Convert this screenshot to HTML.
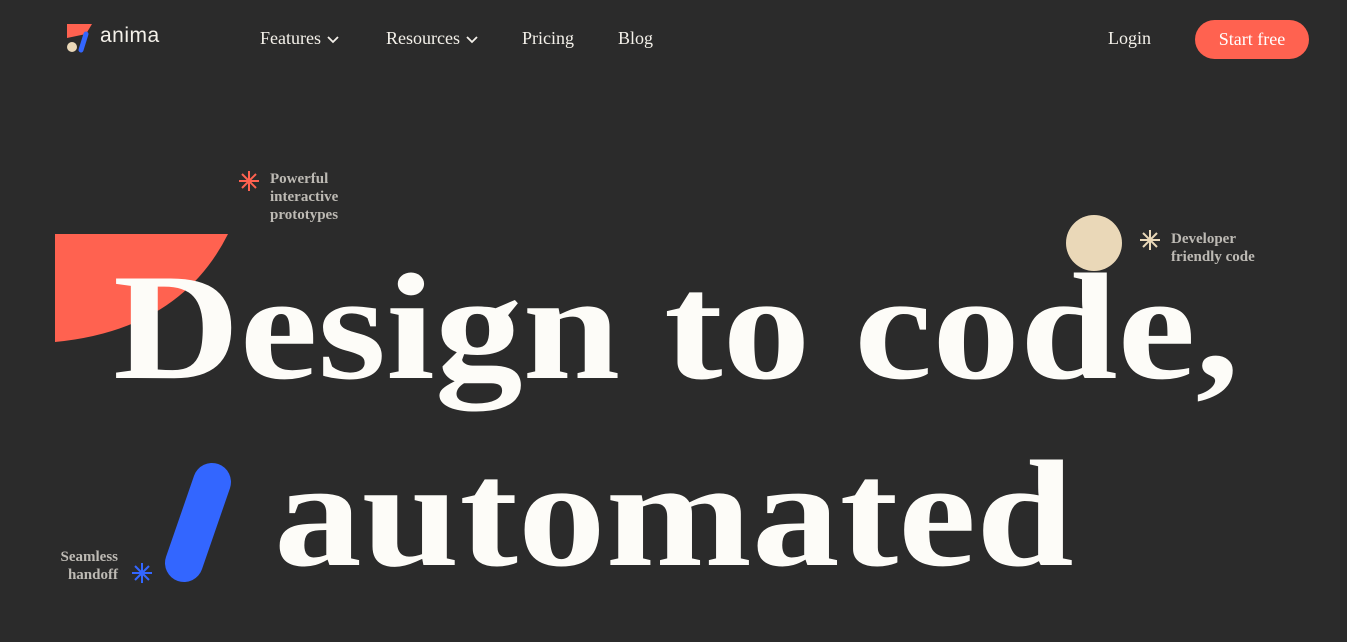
<!DOCTYPE html>
<html><head><style>
html,body{margin:0;padding:0;}
body{width:1347px;height:642px;background:#2b2b2b;overflow:hidden;position:relative;font-family:"Liberation Serif",serif;color:#fff;}
.a{position:absolute;}
.nav{font-size:18px;color:#f4f1ea;top:28px;}
.nav svg{vertical-align:middle;margin-left:6px}
.tag{font-size:15px;line-height:18px;color:#bdbab4;font-weight:bold;}
.h{font-size:152px;font-weight:bold;color:#fdfcf8;white-space:nowrap;letter-spacing:0px;line-height:1;transform-origin:0 0;transform:scaleX(1.155);}
</style></head><body>
<svg class="a" style="left:64px;top:22px" width="32" height="32" viewBox="0 0 32 32">
<path d="M3 2 H28 L22 12 L3 16 Z" fill="#ff6250"/>
<circle cx="8" cy="25" r="5" fill="#ead8b8"/>
<path d="M22 12 L17 28" stroke="#3366ff" stroke-width="5" stroke-linecap="round"/>
</svg>
<div class="a" style="left:100px;top:24px;font-family:'Liberation Sans',sans-serif;font-size:21px;color:#f4f1ea;letter-spacing:0.5px">anima</div>
<div class="a nav" style="left:260px">Features<svg width="12" height="8" viewBox="0 0 12 8"><path d="M1 1 L6 6 L11 1" stroke="#f4f1ea" stroke-width="1.8" fill="none"/></svg></div>
<div class="a nav" style="left:386px">Resources<svg width="12" height="8" viewBox="0 0 12 8"><path d="M1 1 L6 6 L11 1" stroke="#f4f1ea" stroke-width="1.8" fill="none"/></svg></div>
<div class="a nav" style="left:522px">Pricing</div>
<div class="a nav" style="left:618px">Blog</div>
<div class="a nav" style="left:1108px">Login</div>
<div class="a" style="left:1195px;top:20px;width:114px;height:39px;border-radius:20px;background:#ff6250;color:#fff;font-size:18px;text-align:center;line-height:38px">Start free</div>

<svg class="a" style="left:0;top:0" width="1347" height="642">
<path d="M55 234 H228 Q180 330 55 342 Z" fill="#ff6250"/>
<circle cx="1094" cy="243" r="28" fill="#ead8b8"/>
<line x1="212" y1="482" x2="184" y2="563" stroke="#3366ff" stroke-width="38" stroke-linecap="round"/>
<g stroke="#ff6250" stroke-width="2"><line x1="249" y1="171" x2="249" y2="191"/><line x1="239" y1="181" x2="259" y2="181"/><line x1="242" y1="174" x2="256" y2="188"/><line x1="256" y1="174" x2="242" y2="188"/></g>
<g stroke="#ead8b8" stroke-width="2"><line x1="1150" y1="230" x2="1150" y2="250"/><line x1="1140" y1="240" x2="1160" y2="240"/><line x1="1143" y1="233" x2="1157" y2="247"/><line x1="1157" y1="233" x2="1143" y2="247"/></g>
<g stroke="#3366ff" stroke-width="2"><line x1="142" y1="563" x2="142" y2="583"/><line x1="132" y1="573" x2="152" y2="573"/><line x1="135" y1="566" x2="149" y2="580"/><line x1="149" y1="566" x2="135" y2="580"/></g>
</svg>
<div class="a tag" style="left:270px;top:170px">Powerful<br>interactive<br>prototypes</div>
<div class="a tag" style="left:1171px;top:230px">Developer<br>friendly code</div>
<div class="a tag" style="left:40px;top:548px;width:78px;text-align:right">Seamless<br>handoff</div>
<div class="a h" style="left:113px;top:251px">Design to code,</div>
<div class="a h" style="left:274px;top:438px">automated</div>
</body></html>
